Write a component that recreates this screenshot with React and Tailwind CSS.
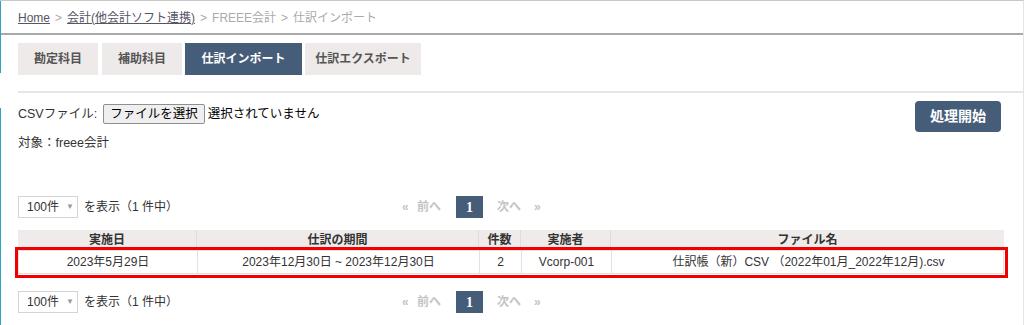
import React from "react";

const font = { fontFamily: '"Liberation Sans", "Noto Sans CJK JP", sans-serif' };

function PerPage() {
  return (
    <div className="flex items-center gap-[6px] text-[12px] text-[#333] whitespace-nowrap">
      <div className="flex items-center w-[60px] h-[22px] border border-[#d5d5d5] bg-white pl-[8px] gap-[7px]">
        <span>100件</span>
        <span className="text-[8px] text-[#999]">▼</span>
      </div>
      <span>を表示（1 件中）</span>
    </div>
  );
}

function Pager() {
  return (
    <div className="flex items-center text-[12px] font-bold text-[#c4c4c4] whitespace-nowrap">
      <span className="w-[14px] text-[12px]">«</span>
      <span className="ml-[1px]">前へ</span>
      <span className="ml-[15px] w-[27px] h-[22px] bg-[#465d79] text-white flex items-center justify-center text-[14px]" style={{ fontFamily: '"Liberation Serif", serif' }}>1</span>
      <span className="ml-[14px]">次へ</span>
      <span className="ml-[13px] text-[12px]">»</span>
    </div>
  );
}

export default function App() {
  return (
    <div className="w-[1024px] h-[325px] bg-white relative overflow-hidden border-t border-[#c8c8c8] border-r border-r-[#e4e4e4]" style={font}>
      <div className="absolute left-0 top-0 w-[1px] h-[72px] bg-[#2ea3c2]" />
      <div className="absolute left-0 top-[107px] w-[1px] h-[220px] bg-[#2ea3c2]" />

      {/* breadcrumb */}
      <div className="h-[34px] border-b-2 border-[#a9a9a9] flex items-center pl-[18px] pt-[1px] text-[12px] text-[#aaa] gap-[5px] whitespace-nowrap">
        <span className="underline text-[#556]">Home</span>
        <span>&gt;</span>
        <span className="underline text-[#556]">会計(他会計ソフト連携)</span>
        <span>&gt;</span>
        <span>FREEE会計</span>
        <span>&gt;</span>
        <span>仕訳インポート</span>
      </div>

      {/* tabs */}
      <div className="pl-[18px] mt-[8px] flex gap-[3px] text-[12px] font-bold">
        <div className="w-[80px] h-[32px] bg-[#eeeae9] text-[#555] flex items-center justify-center">勘定科目</div>
        <div className="w-[80px] h-[32px] bg-[#eeeae9] text-[#555] flex items-center justify-center ml-[1px]">補助科目</div>
        <div className="w-[117px] h-[32px] bg-[#465d79] text-white flex items-center justify-center">仕訳インポート</div>
        <div className="w-[116px] h-[32px] bg-[#eeeae9] text-[#555] flex items-center justify-center">仕訳エクスポート</div>
      </div>

      <div className="ml-[18px] mt-[16px] border-t-2 border-[#e6e6e6]" />

      {/* form */}
      <div className="pl-[18px] pr-[22px] flex justify-between">
        <div className="flex flex-col text-[12.5px] text-[#333] whitespace-nowrap">
          <div className="flex items-center h-[20px] mt-[11px]">
            <span>CSVファイル:</span>
            <span className="ml-[6px] h-[20px] px-[6px] border border-[#8f8f8f] bg-[#efefef] rounded-[2px] flex items-center text-black">ファイルを選択</span>
            <span className="ml-[3px] text-black">選択されていません</span>
          </div>
          <div className="mt-[9px] h-[20px] flex items-center">対象：freee会計</div>
        </div>
        <div className="mt-[8px] w-[86px] h-[31px] bg-[#465d79] rounded-[4px] text-white font-bold text-[14px] flex items-center justify-center">処理開始</div>
      </div>

      {/* top controls */}
      <div className="pl-[18px] mt-[43px] flex items-center relative h-[22px]">
        <PerPage />
        <div className="absolute left-[402px] top-0 h-[22px] flex items-center">
          <Pager />
        </div>
      </div>

      {/* table */}
      <div className="ml-[18px] mt-[12px] w-[986px] text-[12px] text-[#333] relative whitespace-nowrap">
        <div className="grid grid-cols-[179px_282px_42px_90px_393px] h-[20px] bg-[#eeebea] font-bold">
          <div className="flex items-center justify-center border-r border-[#e0dcdb]">実施日</div>
          <div className="flex items-center justify-center border-r border-[#e0dcdb]">仕訳の期間</div>
          <div className="flex items-center justify-center border-r border-[#e0dcdb]">件数</div>
          <div className="flex items-center justify-center border-r border-[#e0dcdb]">実施者</div>
          <div className="flex items-center justify-center">ファイル名</div>
        </div>
        <div className="grid grid-cols-[179px_282px_42px_90px_393px] h-[24px] border border-[#e2e2e2] bg-white">
          <div className="flex items-center justify-center border-r border-[#e2e2e2]">2023年5月29日</div>
          <div className="flex items-center justify-center border-r border-[#e2e2e2]">2023年12月30日 ~ 2023年12月30日</div>
          <div className="flex items-center justify-center border-r border-[#e2e2e2]">2</div>
          <div className="flex items-center justify-center border-r border-[#e2e2e2]">Vcorp-001</div>
          <div className="flex items-center justify-center">仕訳帳（新）CSV （2022年01月_2022年12月).csv</div>
        </div>
        <div className="absolute left-[-3px] top-[17px] w-[993px] h-[31px] border-[3px] border-[#f20000]" />
      </div>

      {/* bottom controls */}
      <div className="pl-[18px] mt-[17px] flex items-center relative h-[22px]">
        <PerPage />
        <div className="absolute left-[402px] top-0 h-[22px] flex items-center">
          <Pager />
        </div>
      </div>
    </div>
  );
}
